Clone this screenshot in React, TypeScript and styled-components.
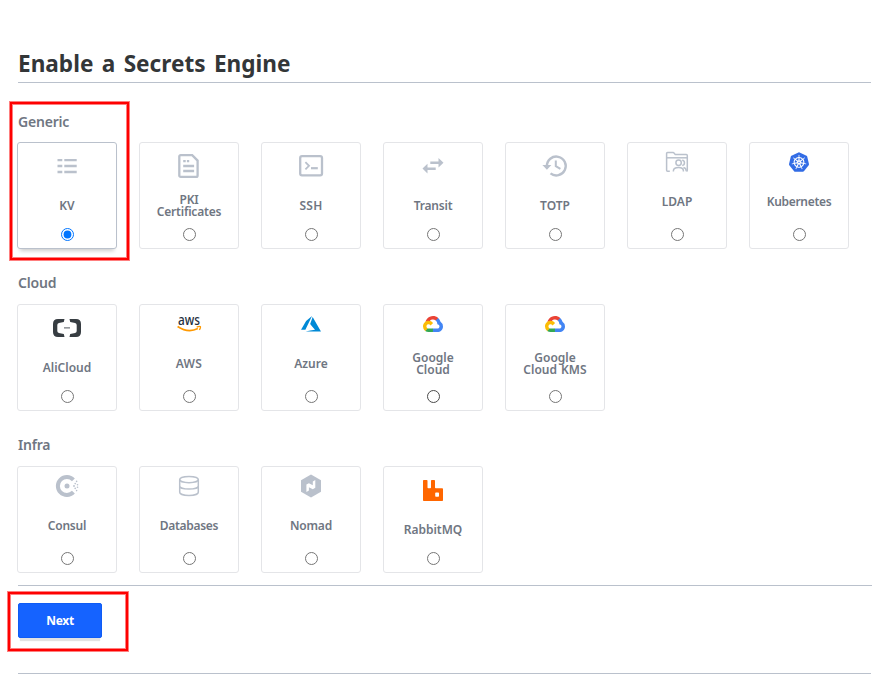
import React, { useState } from "react";
import styled, { createGlobalStyle, css } from "styled-components";
import { SiKubernetes } from "react-icons/si";

const GRAY = "#bac1cc";

const GlobalStyle = createGlobalStyle`
  *, *::before, *::after { box-sizing: border-box; }
  body {
    margin: 0;
    background: #fff;
    color: #6f7682;
    font-family: "Noto Sans", "Open Sans", sans-serif;
  }
`;

const Page = styled.main`
  width: 878px;
  height: 692px;
  padding: 45px 6px 0 17px;
  overflow: hidden;
`;

const Title = styled.h1`
  margin: 0 1px 29px;
  height: 38px;
  border-bottom: 1px solid #bac1cc;
  color: #333638;
  font-size: 22.6px;
  font-weight: 700;
  line-height: 37px;
  white-space: nowrap;
  word-spacing: 2.5px;
`;

const SectionTitle = styled.h2`
  margin: 0 0 0 1px;
  height: 30px;
  font-size: 14px;
  font-weight: 600;
  line-height: 20px;
  letter-spacing: -0.2px;
`;

const Section = styled.section`
  & + & { margin-top: 24px; }
  & + & ${SectionTitle} { height: 31px; }
`;

const Cards = styled.div`
  display: flex;
  gap: 22px;
`;

const Card = styled.label<{ $selected: boolean; $raised: boolean }>`
  display: flex;
  flex-direction: column;
  align-items: center;
  flex: none;
  width: 100px;
  height: 107px;
  padding: ${(p) => (p.$raised ? 7 : 11)}px 0 7px;
  border: 1px solid #e4e5e8;
  border-radius: 3px;
  background: #fff;
  cursor: pointer;
  ${(p) =>
    p.$selected &&
    css`
      border-color: #bac1cc;
      box-shadow: 0 5px 4px -3px rgba(0, 0, 0, 0.2);
    `}
`;

const IconSlot = styled.span`
  display: flex;
  align-items: center;
  justify-content: center;
  height: 24px;
  margin-bottom: 16px;

  svg { display: block; overflow: visible; }
`;

const Name = styled.span<{ $tracking?: number }>`
  display: flex;
  align-items: center;
  height: 24px;
  font-size: 12px;
  font-weight: 600;
  line-height: 12px;
  letter-spacing: ${(p) => p.$tracking ?? 0}px;
  word-spacing: 1px;
  text-align: center;
  white-space: pre-line;
`;

const Radio = styled.input<{ $dark?: boolean }>`
  flex: none;
  width: 13px;
  height: 13px;
  margin: auto 0 0 1px;
  ${(p) =>
    p.$dark &&
    css`
      &:not(:checked) {
        appearance: none;
        border: 1px solid #4a4a4a;
        border-radius: 50%;
      }
    `}
`;

const Footer = styled.footer`
  margin: 12px 0 0 1px;
  padding-top: 17px;
  border-top: 1px solid #bac1cc;
`;

const FooterRule = styled.hr`
  height: 1px;
  margin: 35px 1px 0 0;
  border: 0;
  background: #bac1cc;
`;

const NextButton = styled.button`
  display: block;
  width: 84px;
  height: 35px;
  padding: 0;
  border: 1px solid #0f5cf5;
  border-radius: 2px;
  background: #1563ff;
  box-shadow: 0 5px 1px -2px rgba(0, 0, 0, 0.11);
  color: #fff;
  font: 700 12px/33px "Noto Sans", sans-serif;
  letter-spacing: -0.3px;
`;

/* Annotation frames laid over the page */
const Highlight = styled.div<{ $x: number; $y: number; $w: number; $h: number }>`
  position: absolute;
  left: ${(p) => p.$x}px;
  top: ${(p) => p.$y}px;
  width: ${(p) => p.$w}px;
  height: ${(p) => p.$h}px;
  border: 2px solid #fe0000;
  box-shadow: 0 0 0 1px rgba(254, 0, 0, 0.5), inset 0 0 0 1px rgba(254, 0, 0, 0.5);
  pointer-events: none;
`;

const KvIcon = () => (
  <svg width="24" height="24" viewBox="0 0 24 24" fill={GRAY}>
    <path d="M2.5 4.9h4.8v2.4H2.5zM9.3 4.9h12.4v2.4H9.3zM2.5 10.8h4.8v2.4H2.5zM9.3 10.8h12.4v2.4H9.3zM2.5 16.8h4.8v2.4H2.5zM9.3 16.8h12.4v2.4H9.3z" />
  </svg>
);

const PkiIcon = () => (
  <svg width="24" height="24" viewBox="0 0 24 24" fill="none" stroke={GRAY} strokeWidth="2.3">
    <path d="M3.7 1.2h11.5l5.4 5.4v14.8a1.4 1.4 0 0 1-1.4 1.4H3.7a1.4 1.4 0 0 1-1.4-1.4V2.6a1.4 1.4 0 0 1 1.4-1.4z" />
    <path d="M6.2 7.2h2.5M9.9 7.2h2.3M6.2 12h10.9M6.2 17h10.9" />
  </svg>
);

const SshIcon = () => (
  <svg width="24" height="24" viewBox="0 0 24 24" fill="none" stroke={GRAY} strokeWidth="2.3">
    <rect x="1.2" y="2.2" width="21.8" height="19.2" rx="1.8" />
    <path d="M6.4 8.2l3.6 3.6-3.6 3.6" strokeWidth="1.8" />
    <path d="M12 14.2h6.8" strokeWidth="2.2" />
  </svg>
);

const TransitIcon = () => (
  <svg width="24" height="24" viewBox="0 0 24 24" fill={GRAY}>
    <path d="M9.3 7.4h8.2V4l5 4.8-5 4.8v-3.5H9.3zM14.7 13.4H6.5V9.8l-5 4.8 5 4.8v-3.5h8.2z" />
  </svg>
);

const TotpIcon = () => (
  <svg width="24" height="24" viewBox="0 0 24 24" fill="none" stroke={GRAY} strokeWidth="2.4">
    <path d="M3.9 12.2a9.4 9.4 0 1 1 3.6 7.2" />
    <path d="M-.6 10.9h9l-4.5 4.9z" fill={GRAY} stroke="none" />
    <path d="M12.8 6.4v5.8l4.6 2.7" strokeWidth="2" />
  </svg>
);

const LdapIcon = () => (
  <svg width="24" height="24" viewBox="0 0 24 24" fill="none" stroke={GRAY} strokeWidth="1.5">
    <path d="M4.8 21.3H2.6a1 1 0 0 1-1-1V3.6a1 1 0 0 1 1-1h5.6a1 1 0 0 1 .8.4l1.3 1.6h11a1 1 0 0 1 1 1v14.7a1 1 0 0 1-.8 1" />
    <path d="M1.6 7.8h20.7" />
    <circle cx="13.6" cy="12.8" r="2.7" />
    <path d="M8.4 21.5v-.8c0-2 1.7-3.3 5.2-3.3s4.8 1.3 4.8 3.3v.8M17.2 10.2c3 .3 3 5 0 5.4M18.4 17.5c1.8.3 2.7 1.3 2.7 2.8v1" />
  </svg>
);

const AliCloudIcon = () => (
  <svg width="28" height="18" viewBox="0 0 28 18" fill="#373d42">
    <path d="M11.5 0H5Q0 0 0 5v8q0 5 5 5h6.5L10.8 15 5.9 13.9q-1.6-.4-1.6-2V6.1q0-1.6 1.6-2L10.8 3z" />
    <path d="M16.5 0H23q5 0 5 5v8q0 5-5 5h-6.5l.7-3 4.9-1.1q1.6-.4 1.6-2V6.1q0-1.6-1.6-2L17.2 3z" />
    <path d="M11 8.1h6v1.5h-6z" fill="#8b8f93" />
  </svg>
);

const AwsIcon = () => (
  <svg width="24" height="24" viewBox="0 0 24 24">
    <text x="12" y="12.6" textAnchor="middle" textLength="22" lengthAdjust="spacingAndGlyphs" fontFamily="Noto Sans" fontSize="13.5" fontWeight="500" fill="#252f3e">aws</text>
    <path d="M.6 14.5Q11 21.5 20.9 16.6" fill="none" stroke="#f90" strokeWidth="1.7" />
    <path d="M19.7 15q3.8-1 3.8-.1t-1.1 3.1" fill="none" stroke="#f90" strokeWidth="1.3" />
  </svg>
);

const AzureIcon = () => (
  <svg width="20" height="15.5" viewBox="0 0 256 199" fill="#0089d6">
    <path d="M118.4 187.7l61-10.8-31.1-36.9-31-37.1L149.5 14 202.4 105.4 256 198.3H58.6zM0 176.4l65-112.8L140.9 0 56 176.4z" />
  </svg>
);

const GoogleCloudIcon = () => (
  <svg width="20" height="16.1" viewBox="0 0 256 206">
    <path fill="#EA4335" d="M170.252 56.819l22.253-22.253 1.483-9.37C153.437-11.677 88.976-7.496 52.42 33.92 42.267 45.423 34.734 59.764 30.717 74.573l7.97-1.123 44.505-7.34 3.436-3.513c19.797-21.742 53.27-24.667 76.128-6.168l7.496.39z" />
    <path fill="#4285F4" d="M224.205 73.918a100.249 100.249 0 0 0-30.217-48.722l-31.232 31.232a55.515 55.515 0 0 1 20.379 44.037v5.544c15.35 0 27.797 12.445 27.797 27.796 0 15.352-12.446 27.573-27.797 27.573h-55.671l-5.466 5.934v33.34l5.466 5.231h55.67c39.93.311 72.553-31.494 72.864-71.424a72.303 72.303 0 0 0-31.793-60.541" />
    <path fill="#34A853" d="M71.87 205.796h55.593V161.29H71.87a27.275 27.275 0 0 1-11.4-2.498l-7.887 2.42-22.409 22.253-1.952 7.574a72.237 72.237 0 0 0 43.648 14.757" />
    <path fill="#FBBC05" d="M71.87 61.425C31.94 61.664-.237 94.228.002 134.158a72.301 72.301 0 0 0 28.222 56.881l32.248-32.246c-13.99-6.322-20.208-22.786-13.887-36.776 6.32-13.99 22.786-20.208 36.775-13.888a27.796 27.796 0 0 1 13.887 13.888l32.248-32.248A72.224 72.224 0 0 0 71.87 61.425" />
  </svg>
);

const ConsulIcon = () => (
  <svg width="24" height="24" viewBox="0 0 24 24" fill={GRAY}>
    <path d="M18.4 5.8a9 9 0 1 0 0 12.4" fill="none" stroke={GRAY} strokeWidth="4" />
    <circle cx="12" cy="12" r="2.5" />
    <circle cx="19" cy="12" r=".9" />
    <circle cx="20.2" cy="9.6" r=".8" />
    <circle cx="20.2" cy="14.4" r=".8" />
    <circle cx="22.5" cy="10.7" r=".8" />
    <circle cx="22.5" cy="13.3" r=".8" />
    <circle cx="21.6" cy="7.4" r=".8" />
    <circle cx="21.6" cy="16.6" r=".8" />
  </svg>
);

const DatabaseIcon = () => (
  <svg width="24" height="24" viewBox="0 0 24 24" fill="none" stroke={GRAY} strokeWidth="1.5">
    <ellipse cx="12" cy="5.6" rx="9.3" ry="3.1" />
    <path d="M2.7 5.6v12.6c0 1.8 4.1 3.2 9.3 3.2s9.3-1.4 9.3-3.2V5.6M2.7 12c0 1.8 4.1 3.1 9.3 3.1s9.3-1.3 9.3-3.1" />
  </svg>
);

const NomadIcon = () => (
  <svg width="24" height="24" viewBox="0 0 24 24">
    <path d="M12 .5l10 5.8v11.4l-10 5.8-10-5.8V6.3z" fill={GRAY} />
    <path d="M7.4 10.6l2.5-1.4 3.9 2V7.4L16.3 6v7.8l-2.5 1.4-3.9-2v3.4L7.4 18z" fill="#fff" />
  </svg>
);

const RabbitIcon = () => (
  <svg width="20" height="21" viewBox="0 0 20 21">
    <path
      fill="#f60"
      fillRule="evenodd"
      d="M.8 0h2.9q.8 0 .8.8v6.7q0 .8.8.8h1.9q.8 0 .8-.8V.8Q8 0 8.8 0h2.4q.8 0 .8.8v6.7q0 .8.8.8h6.4q.8 0 .8.8v11.1q0 .8-.8.8H.8q-.8 0-.8-.8V.8Q0 0 .8 0zM13 12.5q-.8 0-.8.8V16q0 .8.8.8h2.2q.8 0 .8-.8v-2.7q0-.8-.8-.8z"
    />
  </svg>
);

interface Engine {
  id: string;
  name: string;
  icon: React.ReactNode;
  raised?: boolean;
  dark?: boolean;
  tracking?: number;
}

const sections: { title: string; engines: Engine[] }[] = [
  {
    title: "Generic",
    engines: [
      { id: "kv", name: "KV", icon: <KvIcon /> },
      { id: "pki", name: "PKI\nCertificates", icon: <PkiIcon />, tracking: -0.2 },
      { id: "ssh", name: "SSH", icon: <SshIcon />, tracking: 0.2 },
      { id: "transit", name: "Transit", icon: <TransitIcon />, tracking: -0.2 },
      { id: "totp", name: "TOTP", icon: <TotpIcon /> },
      { id: "ldap", name: "LDAP", icon: <LdapIcon />, raised: true },
      { id: "kubernetes", name: "Kubernetes", icon: <SiKubernetes size={20} color="#326ce5" />, raised: true, tracking: -0.3 },
    ],
  },
  {
    title: "Cloud",
    engines: [
      { id: "alicloud", name: "AliCloud", icon: <AliCloudIcon /> },
      { id: "aws", name: "AWS", icon: <AwsIcon />, raised: true, tracking: 0.3 },
      { id: "azure", name: "Azure", icon: <AzureIcon />, raised: true },
      { id: "gcp", name: "Google\nCloud", icon: <GoogleCloudIcon />, raised: true, dark: true },
      { id: "gcpkms", name: "Google\nCloud KMS", icon: <GoogleCloudIcon />, raised: true },
    ],
  },
  {
    title: "Infra",
    engines: [
      { id: "consul", name: "Consul", icon: <ConsulIcon />, raised: true, tracking: -0.2 },
      { id: "databases", name: "Databases", icon: <DatabaseIcon />, raised: true, tracking: -0.3 },
      { id: "nomad", name: "Nomad", icon: <NomadIcon />, raised: true, tracking: -0.2 },
      { id: "rabbitmq", name: "RabbitMQ", icon: <RabbitIcon /> },
    ],
  },
];

export default function App() {
  const [selected, setSelected] = useState("kv");
  return (
    <>
      <GlobalStyle />
      <Page>
        <Title>Enable a Secrets Engine</Title>
        {sections.map((section) => (
          <Section key={section.title}>
            <SectionTitle>{section.title}</SectionTitle>
            <Cards>
              {section.engines.map((e) => (
                <Card key={e.id} $selected={selected === e.id} $raised={!!e.raised}>
                  <IconSlot>{e.icon}</IconSlot>
                  <Name $tracking={e.tracking}>{e.name}</Name>
                  <Radio
                    type="radio"
                    name="engine"
                    $dark={e.dark}
                    checked={selected === e.id}
                    onChange={() => setSelected(e.id)}
                  />
                </Card>
              ))}
            </Cards>
          </Section>
        ))}
        <Footer>
          <NextButton type="button">Next</NextButton>
          <FooterRule />
        </Footer>
      </Page>
      <Highlight $x={10} $y={102} $w={119} $h={158} />
      <Highlight $x={8} $y={592} $w={120} $h={59} />
    </>
  );
}
